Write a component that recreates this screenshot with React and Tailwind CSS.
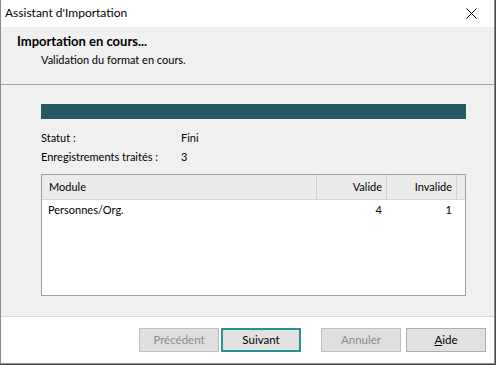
export default function App() {
  return (
    <div className="w-[496px] h-[365px] bg-[#4b4b4b] overflow-hidden font-['Lato',sans-serif]">
      <div className="w-[495px] h-[364px] bg-[#f0f0f0] border-l border-r border-b border-[#8a8a8a] flex flex-col text-[11px] text-black">
        {/* Title bar */}
        <div className="h-[27px] bg-white flex items-center justify-between pl-[4px] pr-[17px] shrink-0">
          <span className="text-[12px] leading-none -mt-[2px]">Assistant d'Importation</span>
          <svg width="11" height="11" viewBox="0 0 11 11" className="shrink-0">
            <path d="M0.5 0.5 L10.5 10.5 M10.5 0.5 L0.5 10.5" stroke="#000" strokeWidth="1" />
          </svg>
        </div>
        {/* Header */}
        <div className="h-[58px] shrink-0 border-b border-[#a0a0a0] pl-[16px] pt-[5px] flex flex-col">
          <span className="font-bold text-[13px] leading-[18px]">Importation en cours...</span>
          <span className="pl-[24px] leading-[18px] mt-[1px]">Validation du format en cours.</span>
        </div>
        {/* Content */}
        <div className="flex-1 flex flex-col pl-[40px] pr-[28px] pt-[19px]">
          <div className="h-[15px] bg-[#265963] w-full" />
          <div className="flex mt-[10px] h-[19px] items-center">
            <span className="w-[140px]">Statut :</span>
            <span>Fini</span>
          </div>
          <div className="flex h-[19px] items-center">
            <span className="w-[140px]">Enregistrements traités :</span>
            <span>3</span>
          </div>
          <div className="mt-[7px] h-[122px] border border-[#a0a0a0] bg-white flex flex-col">
            <div className="h-[25px] bg-[#ebebeb] border-b border-[#d5d5d5] flex">
              <div className="w-[275px] border-r border-[#d0d0d0] flex items-center pl-[7px]">Module</div>
              <div className="w-[70px] border-r border-[#d0d0d0] flex items-center justify-end pr-[4px]">Valide</div>
              <div className="w-[70px] border-r border-[#d0d0d0] flex items-center justify-end pr-[4px]">Invalide</div>
              <div className="flex-1" />
            </div>
            <div className="flex h-[20px] items-center">
              <div className="w-[275px] pl-[6px]">Personnes/Org.</div>
              <div className="w-[70px] text-right pr-[5px]">4</div>
              <div className="w-[70px] text-right pr-[5px]">1</div>
            </div>
          </div>
        </div>
        {/* Footer */}
        <div className="h-[47px] shrink-0 border-t border-[#d8d8d8] bg-white flex items-start justify-end pr-[8px] pt-[11px]">
          <button className="w-[80px] h-[24px] bg-[#e0dede] border border-[#bfbfbf] text-[#8c8c8c] text-[11.5px] leading-none">Précédent</button>
          <button className="ml-[2px] w-[80px] h-[24px] bg-[#e1e1e1] border-2 border-[#2b9090] text-black text-[11.5px] leading-none">Suivant</button>
          <button className="ml-[20px] w-[80px] h-[24px] bg-[#e0dede] border border-[#bfbfbf] text-[#8c8c8c] text-[11.5px] leading-none">Annuler</button>
          <button className="ml-[5px] w-[80px] h-[24px] bg-[#e1e1e1] border border-[#adadad] text-black text-[11.5px] leading-none"><span className="underline">A</span>ide</button>
        </div>
      </div>
    </div>
  );
}
